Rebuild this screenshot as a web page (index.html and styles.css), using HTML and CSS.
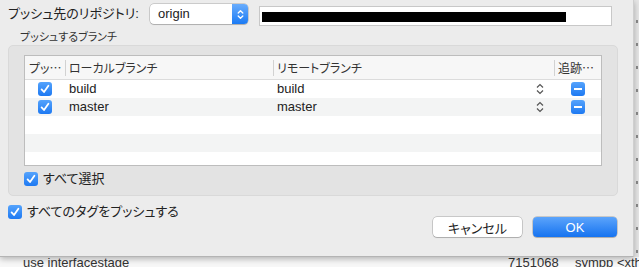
FILE: index.html
```html
<!DOCTYPE html>
<html lang="ja">
<head>
    <meta charset="UTF-8">
    <title>プッシュ</title>
    <link rel="stylesheet" href="styles.css">
</head>
<body>
<div class="window">
    <!-- commit list row peeking out under the sheet -->
    <div class="under-row">
        <span>use interfacestage</span>
        <span>7151068</span>
        <span>sympp &lt;xth</span>
    </div>

    <div class="sheet">
        <div class="repo-row">
            <span class="repo-label">プッシュ先のリポジトリ:</span>
            <div class="popup">
                <span class="popup-value">origin</span>
                <span class="popup-arrows">
                    <svg width="7" height="11" viewBox="0 0 7 11"><path d="M1.2 4 L3.5 1.7 L5.8 4 M1.2 7 L3.5 9.3 L5.8 7" stroke="#fff" stroke-width="1.3" fill="none" stroke-linecap="round" stroke-linejoin="round"/></svg>
                </span>
            </div>
            <div class="url-field"><span class="redacted"></span></div>
        </div>

        <div class="section-title">プッシュするブランチ</div>

        <div class="group">
            <div class="branch-table">
                <div class="thead">
                    <div class="th">プッ…</div>
                    <div class="th">ローカルブランチ</div>
                    <div class="th">リモートブランチ</div>
                    <div class="th">追跡…</div>
                </div>
                <div class="tr">
                    <div class="cell-check"><span class="checkbox"><svg width="14" height="14" viewBox="0 0 14 14"><path d="M3.6 7.4 L6 10 L10.4 3.8" stroke="#fff" stroke-width="1.8" fill="none" stroke-linecap="round" stroke-linejoin="round"/></svg></span></div>
                    <div class="cell">build</div>
                    <div class="cell cell-remote">build
                        <svg width="8" height="12" viewBox="0 0 8 12"><path d="M1 4.5 L4 1.5 L7 4.5 M1 7.5 L4 10.5 L7 7.5" stroke="#555" stroke-width="1.2" fill="none"/></svg>
                    </div>
                    <div class="cell-check"><span class="minus"></span></div>
                </div>
                <div class="tr">
                    <div class="cell-check"><span class="checkbox"><svg width="14" height="14" viewBox="0 0 14 14"><path d="M3.6 7.4 L6 10 L10.4 3.8" stroke="#fff" stroke-width="1.8" fill="none" stroke-linecap="round" stroke-linejoin="round"/></svg></span></div>
                    <div class="cell">master</div>
                    <div class="cell cell-remote">master
                        <svg width="8" height="12" viewBox="0 0 8 12"><path d="M1 4.5 L4 1.5 L7 4.5 M1 7.5 L4 10.5 L7 7.5" stroke="#555" stroke-width="1.2" fill="none"/></svg>
                    </div>
                    <div class="cell-check"><span class="minus"></span></div>
                </div>
                <div class="tr"></div>
                <div class="tr"></div>
                <div class="tr tr-last"></div>
            </div>

            <label class="check-row select-all">
                <span class="checkbox"><svg width="14" height="14" viewBox="0 0 14 14"><path d="M3.6 7.4 L6 10 L10.4 3.8" stroke="#fff" stroke-width="1.8" fill="none" stroke-linecap="round" stroke-linejoin="round"/></svg></span>
                すべて選択
            </label>
        </div>

        <div class="footer">
            <label class="check-row">
                <span class="checkbox"><svg width="14" height="14" viewBox="0 0 14 14"><path d="M3.6 7.4 L6 10 L10.4 3.8" stroke="#fff" stroke-width="1.8" fill="none" stroke-linecap="round" stroke-linejoin="round"/></svg></span>
                すべてのタグをプッシュする
            </label>
            <div class="buttons">
                <button class="btn btn-cancel">キャンセル</button>
                <button class="btn btn-primary">OK</button>
            </div>
        </div>
    </div>
</div>
</body>
</html>
```

FILE: styles.css
```css
* {
    box-sizing: border-box;
}
body {
    margin: 0;
    font-family: "Liberation Sans", "Noto Sans CJK JP", sans-serif;
    font-feature-settings: "palt";
    font-size: 13px;
    color: #222;
}
.window {
    position: relative;
    width: 639px;
    height: 267px;
    overflow: hidden;
    background:
        repeating-linear-gradient(to bottom, transparent 0 20px, #8a8a8a 20px 23px) right 1px top 0 / 2px 257px no-repeat,
        linear-gradient(#e6e6e6, #e6e6e6) right top / 6px 257px no-repeat,
        #f7f7f7;
}
.under-row {
    display: grid;
    grid-template-columns: 485px 67px 64px;
    padding: 255px 0 0 23px;
    line-height: 16px;
    color: #333;
    white-space: nowrap;
}

/* sheet dialog */
.sheet {
    position: absolute;
    top: 0;
    left: 0;
    width: 634px;
    height: 257px;
    padding: 0 16px 0 8px;
    background: #ececec;
    border-right: 1px solid #cfcfcf;
    border-bottom: 1px solid #b4b4b4;
    box-shadow: 0 2px 6px rgba(0, 0, 0, 0.28);
}
.repo-row {
    display: flex;
    align-items: flex-start;
    height: 30px;
    padding-top: 4px;
}
.repo-label {
    width: 142px;
    line-height: 20px;
    white-space: nowrap;
}
.popup {
    display: flex;
    width: 98px;
    height: 20px;
    background: #fff;
    border-radius: 4px;
    box-shadow: 0 0 0 0.5px rgba(0, 0, 0, 0.28), 0 1px 1px rgba(0, 0, 0, 0.14);
}
.popup-value {
    flex: 1;
    padding-left: 8px;
    line-height: 20px;
}
.popup-arrows {
    display: flex;
    align-items: center;
    justify-content: center;
    width: 16px;
    border-radius: 0 4px 4px 0;
    background: linear-gradient(#69adfd, #1b7bf4);
}
.url-field {
    width: 353px;
    height: 20px;
    margin: 2px 0 0 11px;
    padding: 5px 0 0 2px;
    background: #fff;
    border: 1px solid #c8c8c8;
}
.redacted {
    display: block;
    width: 304px;
    height: 10px;
    background: #000;
}
.section-title {
    margin-left: 12px;
    font-size: 11px;
    line-height: 14px;
    color: #333;
}

/* group box with table */
.group {
    width: 610px;
    height: 151px;
    margin-top: 1px;
    padding: 9px 15px 0;
    background: #e3e3e3;
    border: 1px solid #d9d9d9;
    border-radius: 5px;
}
.branch-table {
    height: 111px;
    background: #fff;
    border: 1px solid #bdbdbd;
    overflow: hidden;
}
.thead,
.tr {
    display: grid;
    grid-template-columns: 40px 208px 281px 47px;
}
.thead {
    height: 24px;
    background: #f7f7f7;
    border-bottom: 1px solid #dcdcdc;
}
.th {
    padding-left: 4px;
    font-family: "Noto Sans CJK JP", sans-serif;
    font-size: 12px;
    line-height: 23px;
    color: #333;
    white-space: nowrap;
    overflow: hidden;
}
.th + .th {
    background: linear-gradient(#d2d2d2, #d2d2d2) no-repeat 0 4px / 1px 16px;
}
.tr {
    height: 18px;
    align-items: center;
}
.tr:nth-child(odd) {
    background: #f3f4f4;
}
.tr-last {
    height: 13px;
}
.cell {
    padding-left: 4px;
    line-height: 18px;
    color: #222;
}
.cell-remote {
    display: flex;
    align-items: center;
    justify-content: space-between;
    padding-right: 10px;
}
.cell-check {
    display: flex;
    justify-content: center;
    align-items: center;
}
.checkbox {
    display: block;
    flex: none;
    width: 14px;
    height: 14px;
    border-radius: 3px;
    background: linear-gradient(#55a3fc, #1d79f2);
}
.checkbox svg {
    display: block;
}
.minus {
    display: flex;
    align-items: center;
    justify-content: center;
    width: 14px;
    height: 14px;
    border-radius: 3px;
    background: linear-gradient(#55a3fc, #1d79f2);
}
.minus::before {
    content: "";
    width: 8px;
    height: 2px;
    background: #fff;
}
.check-row {
    display: flex;
    align-items: center;
    gap: 5px;
    line-height: 14px;
    white-space: nowrap;
}
.select-all {
    margin-top: 6px;
}

/* bottom */
.footer {
    display: flex;
    justify-content: space-between;
    align-items: flex-start;
    margin-top: 9px;
}
.buttons {
    display: flex;
    gap: 11px;
    margin-top: 12px;
}
.btn {
    height: 20px;
    padding: 0;
    font: inherit;
    font-size: 13px;
    color: #222;
    background: #fff;
    border: none;
    border-radius: 4px;
    box-shadow: 0 0 0 0.5px rgba(0, 0, 0, 0.3), 0 1px 1px rgba(0, 0, 0, 0.14);
}
.btn-cancel {
    width: 89px;
}
.btn-primary {
    width: 84px;
    color: #fff;
    background: linear-gradient(#5ca4fb, #1673f0);
}
```
